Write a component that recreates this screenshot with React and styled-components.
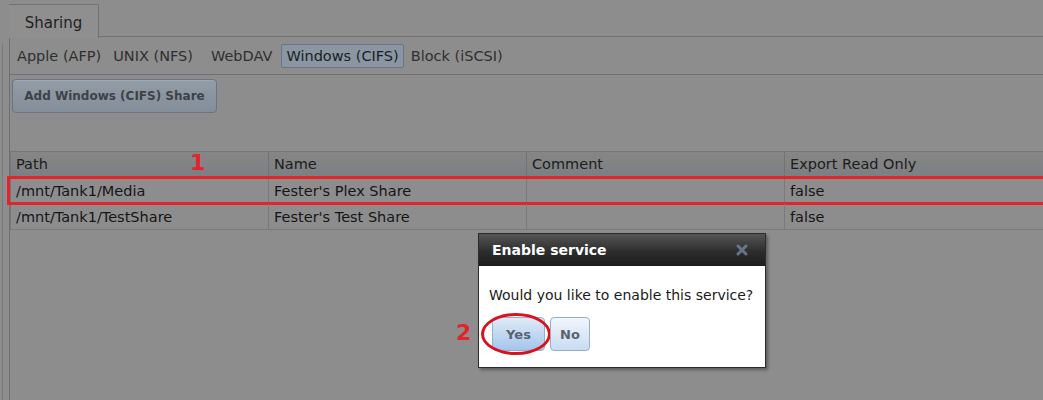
import styled, { createGlobalStyle } from "styled-components";

const GlobalStyle = createGlobalStyle`
  html, body {
    margin: 0;
    padding: 0;
    background: #8d8d8d;
    font-family: "DejaVu Sans", Verdana, sans-serif;
    overflow: hidden;
  }
`;

const subTabs = [
  { label: "Apple (AFP)", gap: 2 },
  { label: "UNIX (NFS)", gap: 8 },
  { label: "WebDAV", gap: 4 },
  { label: "Windows (CIFS)", gap: 2, active: true },
  { label: "Block (iSCSI)", gap: 0 },
];
const columns = ["Path", "Name", "Comment", "Export Read Only"];
const shares = [
  { path: "/mnt/Tank1/Media", name: "Fester's Plex Share", comment: "", ro: "false", marked: true },
  { path: "/mnt/Tank1/TestShare", name: "Fester's Test Share", comment: "", ro: "false" },
];

export default function App() {
  return (
    <>
      <GlobalStyle />
      <Page>
        <Rail />
        <Main>
          <TabStrip>
            <Tab>Sharing</Tab>
          </TabStrip>
          <SubTabBar>
            {subTabs.map((t) => (
              <SubTab key={t.label} $active={t.active} $gap={t.gap}>{t.label}</SubTab>
            ))}
          </SubTabBar>
          <Toolbar>
            <ActionButton>Add Windows (CIFS) Share</ActionButton>
          </Toolbar>
          <Grid>
            <HeaderRow>
              {columns.map((c) => (
                <HeadCell key={c}>{c}</HeadCell>
              ))}
              <Marker $top={-2} $left={179}>1</Marker>
            </HeaderRow>
            {shares.map((s) => (
              <Row key={s.path} $marked={s.marked}>
                <Cell>{s.path}</Cell>
                <Cell>{s.name}</Cell>
                <Cell>{s.comment}</Cell>
                <Cell>{s.ro}</Cell>
              </Row>
            ))}
          </Grid>
        </Main>

        <Dialog>
          <DialogTitle>
            Enable service
            <CloseIcon viewBox="0 0 12 12">
              <path d="M2 2 L10 10 M10 2 L2 10" stroke="#70839a" strokeWidth="3" strokeLinecap="round" />
            </CloseIcon>
          </DialogTitle>
          <DialogBody>
            <Question>Would you like to enable this service?</Question>
            <ButtonRow>
              <Marker $top={3} $left={-33}>2</Marker>
              <DialogButton $primary>
                Yes
                <Ring />
              </DialogButton>
              <DialogButton>No</DialogButton>
            </ButtonRow>
          </DialogBody>
        </Dialog>
      </Page>
    </>
  );
}

const Page = styled.div`
  position: relative;
  display: flex;
  width: 1043px;
  height: 400px;
  overflow: hidden;
`;

const Rail = styled.div`
  flex: none;
  width: 6px;
  margin: 44px 0 0 2px;
  border-left: 1px solid #7b7b7b;
`;

const Main = styled.div`
  flex: 1;
  border-left: 1px solid #707070;
  margin-top: 36px;
  display: flex;
  flex-direction: column;
  position: relative;
`;

const TabStrip = styled.div`
  height: 0;
  position: relative;
  border-top: 1px solid #717171;
  margin-left: 89px;
`;

const Tab = styled.div`
  position: absolute;
  left: -90px;
  bottom: -1px;
  width: 90px;
  height: 34px;
  box-sizing: border-box;
  border: 1px solid #727272;
  border-bottom: none;
  border-left: none;
  border-top-right-radius: 2px;
  background: #8f8f8f;
  color: #1f1f1f;
  font-size: 15px;
  display: flex;
  align-items: center;
  justify-content: center;
  padding-top: 3px;
`;

const SubTabBar = styled.div`
  display: flex;
  align-items: center;
  height: 37px;
  padding-left: 2px;
  border-bottom: 1px solid #717171;
`;

const SubTab = styled.div`
  font-size: 14.5px;
  margin-right: ${(p) => p.$gap}px;
  padding: 3px 4px;
  border-radius: 2px;
  border: 1px solid ${(p) => (p.$active ? "#6b7683" : "transparent")};
  background: ${(p) => (p.$active ? "#8a96a2" : "transparent")};
  color: ${(p) => (p.$active ? "#1a1e24" : "#2f2f2f")};
`;

const Toolbar = styled.div`
  padding: 4px 0 0 2px;
  height: 76px;
  box-sizing: border-box;
`;

const ActionButton = styled.button`
  font-family: inherit;
  font-weight: bold;
  font-size: 12px;
  white-space: nowrap;
  color: #3e4247;
  width: 205px;
  height: 34px;
  padding: 0;
  border-radius: 4px;
  border: 1px solid #6b7480;
  background: linear-gradient(to bottom, #929ca7, #838e9a);
  box-shadow: inset 0 1px 0 rgba(255, 255, 255, 0.12);
`;

const Grid = styled.div`
  border-left: 1px solid #767676;
  width: 1040px;
`;

const HeaderRow = styled.div`
  position: relative;
  display: grid;
  grid-template-columns: 258px 258px 258px 1fr;
  height: 25px;
  border-top: 1px solid #777;
  border-bottom: 1px solid #767676;
  background: linear-gradient(to bottom, #868686, #7c7f83);
`;

const HeadCell = styled.div`
  font-size: 14.5px;
  color: #1c1c1c;
  padding: 4px 5px 0;
  border-right: 1px solid #727272;
  &:nth-child(4) {
    border-right: none;
  }
`;

const Row = styled.div`
  position: relative;
  display: grid;
  grid-template-columns: 258px 258px 258px 1fr;
  height: 25px;
  border-bottom: 1px solid #7a7a7a;
  &::after {
    content: "";
    display: ${(p) => (p.$marked ? "block" : "none")};
    position: absolute;
    left: -4px;
    right: 1px;
    top: -2px;
    bottom: -2px;
    border: 3px solid #e3242b;
  }
`;

const Cell = styled.div`
  font-size: 14.5px;
  color: #151515;
  padding: 5px 4px 0 5px;
  border-right: 1px solid #7a7a7a;
  &:last-child {
    border-right: none;
  }
`;

const Marker = styled.span`
  position: absolute;
  top: ${(p) => p.$top}px;
  left: ${(p) => p.$left}px;
  color: #e3242b;
  font-family: "DejaVu Sans", Verdana, sans-serif;
  font-weight: bold;
  font-size: 22px;
`;

const Dialog = styled.div`
  position: absolute;
  left: 478px;
  top: 233px;
  width: 288px;
  height: 135px;
  box-sizing: border-box;
  border: 1px solid #2c2c2c;
  background: #fff;
  box-shadow: 2px 2px 3px rgba(0, 0, 0, 0.35);
  display: flex;
  flex-direction: column;
`;

const DialogTitle = styled.div`
  height: 32px;
  flex: none;
  display: flex;
  align-items: center;
  justify-content: space-between;
  padding: 0 17px 0 13px;
  background: linear-gradient(to bottom, #555 0%, #2d2d2d 55%, #1c1c1c 100%);
  color: #fff;
  font-weight: bold;
  font-size: 14px;
`;

const CloseIcon = styled.svg`
  width: 12px;
  height: 12px;
  opacity: 0.85;
`;

const DialogBody = styled.div`
  padding: 21px 0 0 10px;
`;

const Question = styled.div`
  font-size: 14px;
  color: #1a1a1a;
`;

const ButtonRow = styled.div`
  position: relative;
  display: flex;
  gap: 5px;
  margin-top: 14px;
  padding-left: 3px;
`;

const DialogButton = styled.button`
  position: relative;
  font-family: inherit;
  font-weight: bold;
  font-size: 13px;
  color: #58636f;
  width: ${(p) => (p.$primary ? "53px" : "40px")};
  height: 34px;
  border-radius: 4px;
  border: 1px solid #96aecb;
  background: ${(p) =>
    p.$primary
      ? "linear-gradient(to bottom, #dfeaf7, #a4c6ec)"
      : "linear-gradient(to bottom, #f1f6fc, #c8dcf2)"};
  padding: 0;
`;

const Ring = styled.span`
  position: absolute;
  left: -12px;
  top: -5px;
  width: 64px;
  height: 36px;
  border: 3px solid #d9111c;
  border-radius: 50%;
  pointer-events: none;
`;
